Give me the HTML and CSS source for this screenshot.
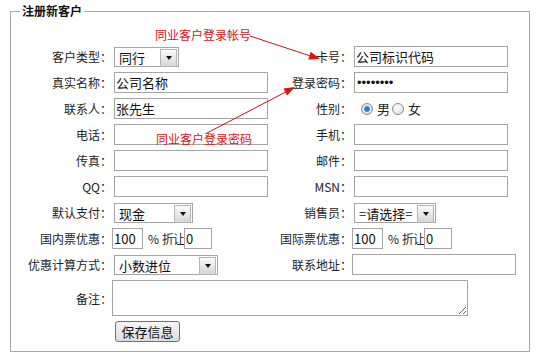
FILE: index.html
```html
<!DOCTYPE html>
<html lang="zh-CN">
<head>
    <meta charset="UTF-8">
    <title>注册新客户</title>
<link rel="stylesheet" href="styles.css">
</head>
<body>
    <form id="customer_form" class="panel">
        <fieldset class="box">
            <legend>注册新客户</legend>

            <div class="grid">
                <label class="label" for="cust_type">客户类型：</label>
                <div class="cell"><span class="select sel-type"><select id="cust_type"><option>同行</option><option>散客</option></select></span></div>
                <label class="label" for="card_no">卡号：</label>
                <div class="cell"><input class="input" type="text" id="card_no" value="公司标识代码"></div>

                <label class="label" for="real_name">真实名称：</label>
                <div class="cell"><input class="input" type="text" id="real_name" value="公司名称"></div>
                <label class="label" for="password">登录密码：</label>
                <div class="cell"><input class="input" type="password" id="password" value="12345678"></div>

                <label class="label" for="contact">联系人：</label>
                <div class="cell"><input class="input" type="text" id="contact" value="张先生"></div>
                <span class="label">性别：</span>
                <div class="cell radios">
                    <label class="radio"><input type="radio" name="sex" checked>男</label>
                    <label class="radio"><input type="radio" name="sex">女</label>
                </div>

                <label class="label" for="phone">电话：</label>
                <div class="cell"><input class="input" type="text" id="phone"></div>
                <label class="label" for="mobile">手机：</label>
                <div class="cell"><input class="input" type="text" id="mobile"></div>

                <label class="label" for="fax">传真：</label>
                <div class="cell"><input class="input" type="text" id="fax"></div>
                <label class="label" for="email">邮件：</label>
                <div class="cell"><input class="input" type="text" id="email"></div>

                <label class="label" for="qq">QQ：</label>
                <div class="cell"><input class="input" type="text" id="qq"></div>
                <label class="label" for="msn">MSN：</label>
                <div class="cell"><input class="input" type="text" id="msn"></div>

                <label class="label" for="pay">默认支付：</label>
                <div class="cell"><span class="select sel-pay"><select id="pay"><option>现金</option><option>月结</option></select></span></div>
                <label class="label" for="sales">销售员：</label>
                <div class="cell"><span class="select sel-sales"><select id="sales"><option>=请选择=</option></select></span></div>

                <label class="label" for="dom_rate">国内票优惠：</label>
                <div class="cell rate">
                    <input class="input small" type="text" id="dom_rate" value="100">
                    <span class="pct">%</span><span class="off">折让</span>
                    <input class="input tiny" type="text" value="0">
                </div>
                <label class="label" for="int_rate">国际票优惠：</label>
                <div class="cell rate">
                    <input class="input small" type="text" id="int_rate" value="100">
                    <span class="pct">%</span><span class="off">折让</span>
                    <input class="input tiny" type="text" value="0">
                </div>

                <label class="label" for="calc">优惠计算方式：</label>
                <div class="cell"><span class="select sel-calc"><select id="calc"><option>小数进位</option><option>四舍五入</option></select></span></div>
                <label class="label" for="address">联系地址：</label>
                <div class="cell"><input class="input wide" type="text" id="address"></div>

                <label class="label" for="remark">备注：</label>
                <div class="cell span"><textarea class="memo" id="remark"></textarea></div>

                <div class="cell start"><button class="button" type="submit">保存信息</button></div>
            </div>
        </fieldset>

        <span class="note note-card">同业客户登录帐号</span>
        <span class="note note-pass">同业客户登录密码</span>
        <svg class="arrows" width="539" height="357" viewBox="0 0 539 357">
            <line x1="250" y1="33" x2="312" y2="53.5" stroke="#cc1111" stroke-width="1"/>
            <polygon points="320,56 308.3,56.4 310.8,48.8" fill="#dd1111"/>
            <line x1="207" y1="130" x2="288" y2="87.8" stroke="#cc1111" stroke-width="1"/>
            <polygon points="295,84 287.1,92.6 283.4,85.6" fill="#dd1111"/>
        </svg>
    </form>
</body>
</html>
```

FILE: styles.css
```css
* {
    box-sizing: border-box;
}

body, input, select, button, textarea {
    font-family: "Noto Sans CJK SC", "Noto Sans", sans-serif;
}

body {
    margin: 0;
    color: #222;
    background-color: #fff;
    font-size: 12px;
}

.panel {
    position: relative;
    width: 539px;
    height: 357px;
    margin: 0;
}

.box {
    margin: 3px 0 0 10px;
    width: 520px;
    padding: 27px 0 9px 0;
    border: 1px solid #a8a8a8;
}

.box legend {
    margin-left: 9px;
    padding: 0 2px;
    font-size: 12px;
    line-height: 16px;
    font-weight: bold;
    color: #111;
}

.grid {
    display: grid;
    grid-template-columns: 101px 158px 82px 176px;
    grid-template-rows: repeat(9, 21px) 36px 21px;
    row-gap: 5px;
}

.label {
    display: flex;
    align-items: center;
    justify-content: flex-end;
    white-space: nowrap;
    font-size: 12px;
}

.cell {
    display: flex;
    align-items: center;
}

.input {
    height: 21px;
    width: 154px;
    margin-left: 2px;
    padding: 0 1px;
    border: 1px solid #a5a5a5;
    font-size: 13px;
    color: #111;
    outline: none;
}

.input[type=password] {
    padding-left: 2px;
    font-family: "Liberation Sans", Arial, sans-serif;
    font-size: 13px;
}

.input.wide {
    width: 164px;
    margin-left: 0;
}

.input.small {
    width: 31px;
    margin-left: 0;
}

.input.tiny {
    width: 28px;
    margin-left: 0;
}

.rate .pct {
    margin-left: 5px;
}

.rate .off {
    margin-left: 3px;
    letter-spacing: -1px;
}

.select {
    position: relative;
    display: inline-block;
    height: 20px;
    margin-left: 2px;
}

.select select {
    appearance: none;
    width: 100%;
    height: 20px;
    padding: 0 0 0 4px;
    border: 1px solid #a5a5a5;
    border-radius: 0;
    background-color: #fff;
    font-size: 13px;
    color: #111;
    outline: none;
}

.select::before {
    content: "";
    position: absolute;
    top: 2px;
    right: 2px;
    width: 15px;
    height: 16px;
    border: 1px solid #b4b4b4;
    background: linear-gradient(#fafafa, #d6d6d6);
    pointer-events: none;
}

.select::after {
    content: "";
    position: absolute;
    top: 9px;
    right: 7px;
    border-left: 3px solid transparent;
    border-right: 3px solid transparent;
    border-top: 4px solid #111;
    pointer-events: none;
}

.sel-type { width: 65px; }
.sel-pay { width: 79px; }
.sel-sales { width: 82px; }
.sel-calc { width: 104px; }

.radios {
    padding-left: 8px;
}

.radio {
    display: flex;
    align-items: center;
    margin-right: 1px;
    font-size: 13px;
}

.radio input {
    appearance: none;
    width: 12px;
    height: 12px;
    margin: 0 4px 0 1px;
    border: 1px solid #8c8c8c;
    border-radius: 50%;
    background: radial-gradient(circle at 40% 35%, #fff, #d8d8d8);
}

.radio input:checked {
    background: radial-gradient(circle, #1f6fb8 0, #3a8fd6 2.5px, #eaeaea 3.5px, #d0d0d0 100%);
}

.span {
    grid-column: 2 / 5;
    align-items: flex-start;
}

.memo {
    width: 356px;
    height: 36px;
    border: 1px solid #a5a5a5;
    outline: none;
}

.start {
    grid-column: 2;
}

.button {
    width: 65px;
    height: 21px;
    margin-left: 3px;
    padding: 0;
    border: 1px solid #707070;
    border-radius: 3px;
    background: linear-gradient(#f6f6f6, #dcdcdc);
    font-size: 13px;
    color: #111;
    cursor: pointer;
}

.note {
    position: absolute;
    font-size: 12px;
    line-height: 14px;
    color: #d41515;
    white-space: nowrap;
}

.note-card {
    left: 155px;
    top: 25px;
}

.note-pass {
    left: 156px;
    top: 129px;
}

.arrows {
    position: absolute;
    left: 0;
    top: 0;
    pointer-events: none;
}
```
